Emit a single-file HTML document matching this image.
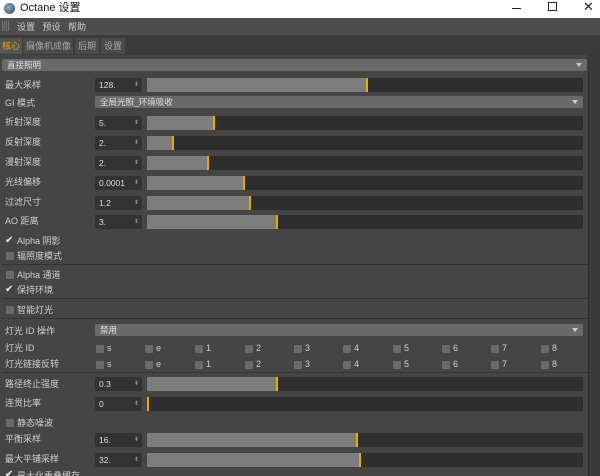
<!DOCTYPE html><html><head><meta charset="utf-8"><style>
*{margin:0;padding:0;box-sizing:border-box}
html,body{width:600px;height:476px;overflow:hidden}
body{background:#454545;font-family:"Liberation Sans","Noto Sans CJK SC",sans-serif;font-size:9px;line-height:1.1;color:#cfcfcf;position:relative}
.a{position:absolute}
.lbl{position:absolute;left:5px;font-size:9px;color:#d0d0d0;margin-top:2px}
.inp{position:absolute;left:95px;width:47px;height:14px;background:#333;border-radius:2px;padding-left:4px;line-height:14px;font-size:8.5px;color:#ddd}
.inp:after{content:"⬍";position:absolute;right:3px;font-size:6px;color:#888}
.sl{position:absolute;left:147px;width:436px;height:14px;background:#2e2e2e;border-radius:1px}
.sl i{position:absolute;left:0;top:0;bottom:0;background:#7d7d7d;border-right:2px solid #e8a900}
.dd{position:absolute;height:12px;background:#6a6a6a;border-radius:2px;padding-left:5px;line-height:12px;color:#e0e0e0;font-size:8.5px}
.dd:after{content:"";position:absolute;right:5px;top:4px;border:3px solid transparent;border-top:4px solid #ccc}
.cb{position:absolute;width:8px;height:8px;background:#6a6a6a;border-radius:1px}
.sep{position:absolute;left:2px;right:12px;height:1px;background:#5a5a5a;border-bottom:1px solid #333}
.ck{position:absolute;font-size:10px;color:#eee;line-height:1;margin-top:1px}
</style></head><body>
<div class="a" style="left:0;top:0;width:600px;height:18px;background:#fff"></div>
<div class="a" style="left:4px;top:3px;width:11px;height:11px;border-radius:50%;background:radial-gradient(circle at 40% 40%,#9ab,#245)"></div>
<div class="a" style="left:20px;top:2px;font-size:11px;color:#111">Octane 设置</div>
<div class="a" style="left:512px;top:8px;width:9px;height:1px;background:#222"></div>
<div class="a" style="left:548px;top:2px;width:9px;height:9px;border:1px solid #222"></div>
<div class="a" style="left:583px;top:0px;font-size:13px;color:#222">✕</div>
<div class="a" style="left:0;top:18px;width:600px;height:17px;background:#4e4e4e"></div>
<div class="a" style="left:2px;top:21px;width:8px;height:10px;background:repeating-linear-gradient(90deg,#777 0 1px,transparent 1px 2px)"></div>
<div class="a" style="left:17px;top:23px;color:#ccc">设置&nbsp;&nbsp;&nbsp;预设&nbsp;&nbsp;&nbsp;帮助</div>
<div class="a" style="left:0;top:35px;width:600px;height:20px;background:#3b3b3b"></div>
<div class="a" style="left:0;top:38px;width:22px;height:16px;background:#555;color:#e8a900;line-height:16px;padding-left:2px">核心</div>
<div class="a" style="left:23px;top:38px;width:50px;height:16px;background:#4a4a4a;color:#aaa;line-height:16px;padding-left:3px">摄像机成像</div>
<div class="a" style="left:75px;top:38px;width:24px;height:16px;background:#4a4a4a;color:#aaa;line-height:16px;padding-left:3px">后期</div>
<div class="a" style="left:101px;top:38px;width:24px;height:16px;background:#4a4a4a;color:#aaa;line-height:16px;padding-left:3px">设置</div>
<div class="a" style="left:588px;top:55px;width:12px;height:421px;background:#3a3a3a;border-left:1px solid #2e2e2e"></div>
<div class="dd" style="left:2px;top:59px;width:585px">直接照明</div>

<div class="lbl" style="top:79px">最大采样</div><div class="inp" style="top:78px">128.</div><div class="sl" style="top:78px"><i style="width:221px"></i></div>
<div class="lbl" style="top:97px">GI 模式</div><div class="dd" style="left:95px;top:96px;width:488px">全局光照_环境吸收</div>
<div class="lbl" style="top:116px">折射深度</div><div class="inp" style="top:116px">5.</div><div class="sl" style="top:116px"><i style="width:68px"></i></div>
<div class="lbl" style="top:136px">反射深度</div><div class="inp" style="top:136px">2.</div><div class="sl" style="top:136px"><i style="width:27px"></i></div>
<div class="lbl" style="top:156px">漫射深度</div><div class="inp" style="top:156px">2.</div><div class="sl" style="top:156px"><i style="width:62px"></i></div>
<div class="lbl" style="top:176px">光线偏移</div><div class="inp" style="top:176px">0.0001</div><div class="sl" style="top:176px"><i style="width:98px"></i></div>
<div class="lbl" style="top:196px">过滤尺寸</div><div class="inp" style="top:196px">1.2</div><div class="sl" style="top:196px"><i style="width:104px"></i></div>
<div class="lbl" style="top:215px">AO 距离</div><div class="inp" style="top:215px">3.</div><div class="sl" style="top:215px"><i style="width:131px"></i></div>

<div class="ck" style="left:5px;top:235px">✔</div><div class="lbl" style="left:17px;top:235px">Alpha 阴影</div>
<div class="cb" style="left:6px;top:252px"></div><div class="lbl" style="left:17px;top:250px">辐照度模式</div>
<div class="sep" style="top:264px"></div>
<div class="cb" style="left:6px;top:271px"></div><div class="lbl" style="left:17px;top:269px">Alpha 通道</div>
<div class="ck" style="left:5px;top:284px">✔</div><div class="lbl" style="left:17px;top:284px">保持环境</div>
<div class="sep" style="top:298px"></div>
<div class="cb" style="left:6px;top:306px"></div><div class="lbl" style="left:17px;top:304px">智能灯光</div>
<div class="sep" style="top:318px"></div>
<div class="lbl" style="top:325px">灯光 ID 操作</div><div class="dd" style="left:95px;top:324px;width:488px">禁用</div>
<div class="lbl" style="top:342px">灯光 ID</div>
<div class="lbl" style="top:358px">灯光链接反转</div>
<div class="sep" style="top:372px"></div>
<div class="lbl" style="top:378px">路径终止强度</div><div class="inp" style="top:377px">0.3</div><div class="sl" style="top:377px"><i style="width:131px"></i></div>
<div class="lbl" style="top:397px">连贯比率</div><div class="inp" style="top:397px">0</div><div class="sl" style="top:397px"><i style="width:2px"></i></div>
<div class="cb" style="left:6px;top:419px"></div><div class="lbl" style="left:17px;top:417px">静态噪波</div>
<div class="lbl" style="top:433px">平衡采样</div><div class="inp" style="top:433px">16.</div><div class="sl" style="top:433px"><i style="width:211px"></i></div>
<div class="lbl" style="top:453px">最大平铺采样</div><div class="inp" style="top:453px">32.</div><div class="sl" style="top:453px"><i style="width:214px"></i></div>
<div class="ck" style="left:5px;top:469px">✔</div><div class="lbl" style="left:17px;top:470px">最大化重叠缓存</div>
<div class="a" style="left:0;top:0">
<div class="cb" style="left:96px;top:345px"></div><div class="lbl" style="left:107px;top:342px">s</div>
<div class="cb" style="left:145px;top:345px"></div><div class="lbl" style="left:156px;top:342px">e</div>
<div class="cb" style="left:195px;top:345px"></div><div class="lbl" style="left:206px;top:342px">1</div>
<div class="cb" style="left:245px;top:345px"></div><div class="lbl" style="left:256px;top:342px">2</div>
<div class="cb" style="left:294px;top:345px"></div><div class="lbl" style="left:305px;top:342px">3</div>
<div class="cb" style="left:343px;top:345px"></div><div class="lbl" style="left:354px;top:342px">4</div>
<div class="cb" style="left:393px;top:345px"></div><div class="lbl" style="left:404px;top:342px">5</div>
<div class="cb" style="left:442px;top:345px"></div><div class="lbl" style="left:453px;top:342px">6</div>
<div class="cb" style="left:491px;top:345px"></div><div class="lbl" style="left:502px;top:342px">7</div>
<div class="cb" style="left:541px;top:345px"></div><div class="lbl" style="left:552px;top:342px">8</div>
<div class="cb" style="left:96px;top:361px"></div><div class="lbl" style="left:107px;top:358px">s</div>
<div class="cb" style="left:145px;top:361px"></div><div class="lbl" style="left:156px;top:358px">e</div>
<div class="cb" style="left:195px;top:361px"></div><div class="lbl" style="left:206px;top:358px">1</div>
<div class="cb" style="left:245px;top:361px"></div><div class="lbl" style="left:256px;top:358px">2</div>
<div class="cb" style="left:294px;top:361px"></div><div class="lbl" style="left:305px;top:358px">3</div>
<div class="cb" style="left:343px;top:361px"></div><div class="lbl" style="left:354px;top:358px">4</div>
<div class="cb" style="left:393px;top:361px"></div><div class="lbl" style="left:404px;top:358px">5</div>
<div class="cb" style="left:442px;top:361px"></div><div class="lbl" style="left:453px;top:358px">6</div>
<div class="cb" style="left:491px;top:361px"></div><div class="lbl" style="left:502px;top:358px">7</div>
<div class="cb" style="left:541px;top:361px"></div><div class="lbl" style="left:552px;top:358px">8</div>
</div>
</body></html>
